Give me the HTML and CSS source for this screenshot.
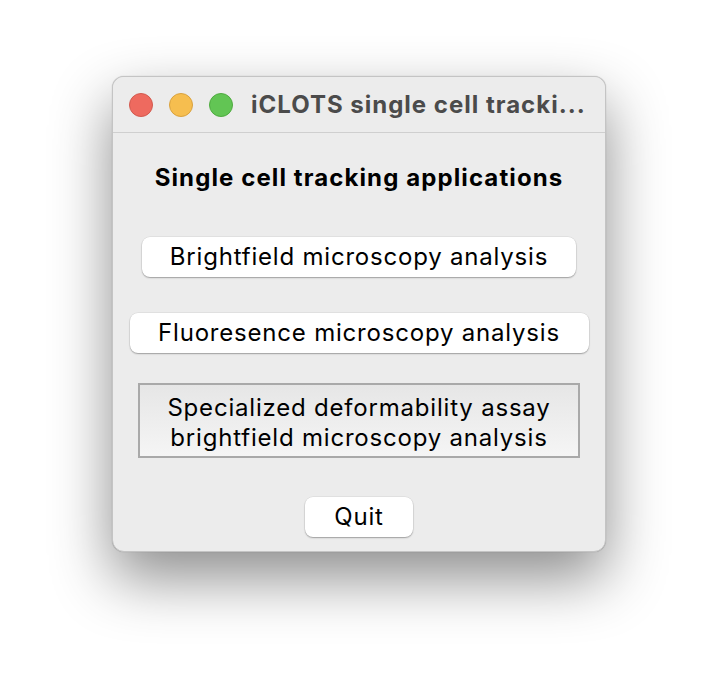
FILE: index.html
```html
<!DOCTYPE html>
<html lang="en">
<head>
<meta charset="utf-8">
<title>iCLOTS single cell tracking</title>
<link rel="stylesheet" href="styles.css">
</head>
<body>
<div class="window">
  <div class="titlebar">
    <div class="lights">
      <span class="light red"></span>
      <span class="light yellow"></span>
      <span class="light green"></span>
    </div>
    <div class="title">iCLOTS single cell tracki...</div>
  </div>
  <div class="content">
    <h1 class="heading">Single cell tracking applications</h1>
    <button class="btn btn-bf">Brightfield microscopy analysis</button>
    <button class="btn btn-fl">Fluoresence microscopy analysis</button>
    <button class="btn-flat">Specialized deformability assay<br>brightfield microscopy analysis</button>
    <button class="btn btn-quit">Quit</button>
  </div>
</div>
</body>
</html>
```
FILE: styles.css
```css
* { box-sizing: border-box; }
html, body { margin: 0; padding: 0; }
body {
  width: 718px;
  height: 700px;
  background: #ffffff;
  display: flex;
  justify-content: center;
  align-items: flex-start;
  padding-top: 76px;
  font-family: "Inter", "Liberation Sans", sans-serif;
  overflow: hidden;
}
.window {
  width: 494px;
  height: 476px;
  border-radius: 12px;
  background: #ececec;
  border: 1px solid #c4c4c4;
  box-shadow: 0 26px 60px rgba(0,0,0,0.45), 0 0 1px rgba(0,0,0,0.3);
  overflow: hidden;
  display: flex;
  flex-direction: column;
}
.titlebar {
  height: 56px;
  flex: 0 0 56px;
  background: #ececec;
  border-bottom: 1px solid #cfcfcf;
  display: flex;
  align-items: center;
  padding-left: 16px;
}
.lights { display: flex; gap: 16px; }
.light {
  width: 24px;
  height: 24px;
  border-radius: 50%;
  display: block;
}
.red { background: #ee6a5f; border: 1px solid #d25a4f; }
.yellow { background: #f6be4f; border: 1px solid #d9a23f; }
.green { background: #62c554; border: 1px solid #4fab40; }
.title {
  margin-left: 18px;
  font-size: 24px;
  font-weight: 700;
  color: #4b4b4b;
  white-space: nowrap;
  letter-spacing: 1px;
}
.content {
  flex: 1;
  display: flex;
  flex-direction: column;
  align-items: center;
  padding-top: 28px;
}
.heading {
  margin: 0;
  font-size: 24px;
  line-height: 34px;
  font-weight: 700;
  color: #000;
  letter-spacing: 1.1px;
}
button {
  font-family: inherit;
  font-size: 24px;
  color: #000;
  cursor: default;
  letter-spacing: 0.8px;
}
.btn {
  height: 40px;
  background: #ffffff;
  border: none;
  border-radius: 8px;
  box-shadow: 0 1px 1.5px rgba(0,0,0,0.3), 0 0 0 0.5px rgba(0,0,0,0.08);
  padding: 0;
  line-height: 40px;
}
.btn-bf { width: 434px; margin-top: 42px; }
.btn-fl { width: 459px; margin-top: 36px; }
.btn-flat {
  width: 442px;
  height: 75px;
  margin-top: 30px;
  border: 2px solid #a9a9a9;
  border-radius: 0;
  background: linear-gradient(#e6e6e6, #f5f5f5);
  line-height: 30px;
  padding: 4px 0 0;
}
.btn-quit { width: 108px; margin-top: 39px; }
```
